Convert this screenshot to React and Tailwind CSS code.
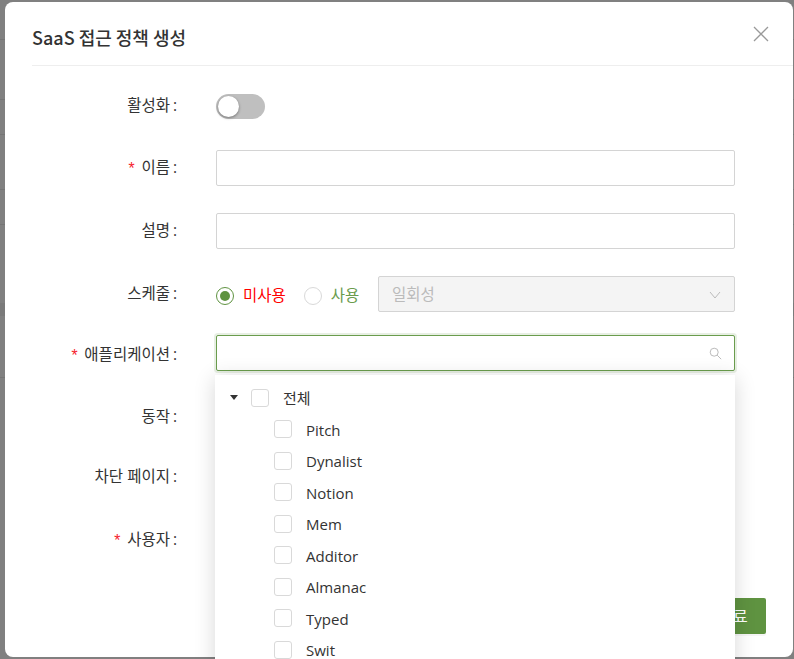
const apps = ["Pitch", "Dynalist", "Notion", "Mem", "Additor", "Almanac", "Typed", "Swit"];

function Label({ required, className = "", children }) {
  return (
    <div className={"flex w-[172px] shrink-0 items-center justify-end text-[15.5px] text-[#333] " + className}>
      {required && <span className="mr-[5px] mt-[4px] text-[16px] leading-none text-[#f5222d] font-['Liberation_Mono',monospace]">*</span>}
      <span>{children}</span>
      <span className="ml-[3px]">:</span>
    </div>
  );
}

function Row({ label, required, className = "", labelClass = "", children }) {
  return (
    <div className={"flex h-[36px] items-center " + className}>
      <Label required={required} className={labelClass}>{label}</Label>
      <div className="ml-[39px] flex flex-1 items-center gap-[18px]">{children}</div>
    </div>
  );
}

function Box() {
  return <span className="block h-[18px] w-[18px] shrink-0 rounded-[3px] border border-[#d9d9d9] bg-white" />;
}

export default function App() {
  return (
    <div className="relative h-[659px] w-[794px] overflow-hidden bg-[#808080] pl-[5px] pt-[2px] font-['Open_Sans','Noto_Sans_CJK_KR',sans-serif]">
      {/* page behind the overlay, only its table lines show at the edge */}
      <div className="absolute inset-0">
        <div className="h-[40px] border-b border-[#757575]" />
        <div className="h-[60px] border-b border-[#757575]" />
        <div className="h-[35px] border-b border-[#757575]" />
        <div className="h-[55px] border-b border-[#757575]" />
        <div className="h-[35px] border-b border-[#757575]" />
        <div className="h-[78px]" />
        <div className="h-[13px] bg-[#7a7a7a]" />
        <div className="h-[62px] border-b border-[#757575]" />
      </div>

      <div className="relative h-[655px] w-[788px] rounded-[8px] bg-white">
        <div className="ml-[27px] flex h-[64px] items-center justify-between border-b border-[#eee]">
          <h1 className="mt-[8px] text-[18px] font-medium text-[#333] font-['Noto_Sans_CJK_KR',sans-serif]">SaaS 접근 정책 생성</h1>
          <svg width="16" height="16" viewBox="0 0 16 16" className="mr-[24px] text-[#999]" fill="none" stroke="currentColor" strokeWidth="1.3">
            <path d="M1 1l14 14M15 1L1 15" />
          </svg>
        </div>

        <Row label="활성화" className="mt-[22px]">
          <div className="h-[25px] w-[49px] rounded-full bg-[#bfbfbf] p-[2px]">
            <div className="h-[21px] w-[21px] rounded-full bg-white shadow-[0_1px_3px_rgba(0,0,0,0.4)]" />
          </div>
        </Row>

        <Row label="이름" required className="mt-[26px]">
          <div className="h-[36px] w-[519px] rounded-[2px] border border-[#d4d4d4] bg-white" />
        </Row>

        <Row label="설명" className="mt-[27px]">
          <div className="h-[36px] w-[519px] rounded-[2px] border border-[#d4d4d4] bg-white" />
        </Row>

        <Row label="스케줄" className="mt-[27px]">
          <div className="mt-[3px] flex w-[144px] items-center text-[15.5px]">
            <span className="flex h-[18px] w-[18px] items-center justify-center rounded-full border border-[#5f9341]">
              <span className="h-[10px] w-[10px] rounded-full bg-[#5f9341]" />
            </span>
            <span className="ml-[9px] text-[#ff0000]">미사용</span>
            <span className="ml-[18px] h-[18px] w-[18px] rounded-full border border-[#d9d9d9]" />
            <span className="ml-[9px] text-[#6a9c4d]">사용</span>
          </div>
          <div className="flex h-[36px] w-[357px] items-center justify-between rounded-[2px] border border-[#d4d4d4] bg-[#f4f4f4] px-[13px] pt-[1px] text-[15.5px] text-[#bbb]">
            <span>일회성</span>
            <svg width="12" height="8" viewBox="0 0 12 8" fill="none" stroke="#bbb" strokeWidth="1">
              <path d="M1 1l5 6 5-6" />
            </svg>
          </div>
        </Row>

        <Row label="애플리케이션" required className="mt-[23px]" labelClass="pt-[3px]">
          <div className="flex h-[36px] w-[519px] items-center justify-end rounded-[2px] border border-[#6a9c4d] bg-white pr-[12px] shadow-[0_0_0_2px_rgba(95,147,65,0.15)]">
            <svg width="13" height="13" viewBox="0 0 13 13" fill="none" stroke="#bbb" strokeWidth="1">
              <circle cx="5.2" cy="5.2" r="4" />
              <path d="M8.2 8.2l4 4" />
            </svg>
          </div>
        </Row>

        <Row label="동작" className="mt-[28px]" />
        <Row label="차단 페이지" className="mt-[24px]" />
        <Row label="사용자" required className="mt-[27px]" />

        <div className="mr-[27px] mt-[40px] flex justify-end">
          <button className="h-[36px] w-[66px] rounded-[2px] bg-[#5f9341] text-[16px] text-white shadow-[0_2px_0_rgba(0,0,0,0.04)]">완료</button>
        </div>

        <div className="absolute left-[210px] top-[373px] h-[300px] w-[520px] bg-white pt-[6.75px] text-[15px] text-[#333] shadow-[0_3px_20px_rgba(0,0,0,0.16)]">
          <div className="flex h-[31.5px] items-center">
            <svg width="8" height="5" viewBox="0 0 8 5" className="ml-[15px]" fill="#333">
              <path d="M0 0h8L4 5z" />
            </svg>
            <span className="ml-[13px]"><Box /></span>
            <span className="ml-[14px] mt-[2px]">전체</span>
          </div>
          {apps.map((app) => (
            <div key={app} className="flex h-[31.5px] items-center pl-[59px]">
              <Box />
              <span className="ml-[14px] mt-[2px]">{app}</span>
            </div>
          ))}
        </div>
      </div>
    </div>
  );
}
